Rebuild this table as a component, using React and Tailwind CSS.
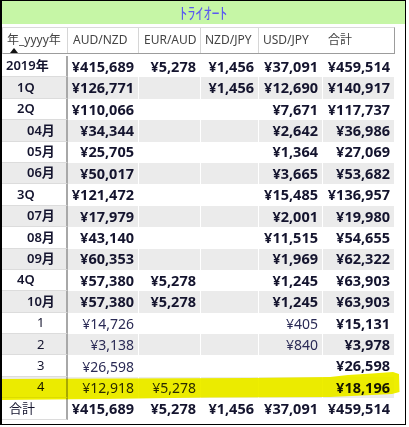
import React from "react";

const COLS = [
  { key: "aud", label: "AUD/NZD", w: "w-[71px]" },
  { key: "eur", label: "EUR/AUD", w: "w-[62px]" },
  { key: "nzd", label: "NZD/JPY", w: "w-[58px]" },
  { key: "usd", label: "USD/JPY", w: "w-[64px]" },
  { key: "sum", label: "合計", w: "w-[71px]" },
];

// level: 0 = 年, 1 = 四半期, 2 = 月, 3 = 日, 9 = 総計
const rows = [
  { label: "2019年", level: 0, v: ["¥415,689", "¥5,278", "¥1,456", "¥37,091", "¥459,514"] },
  { label: "1Q", level: 1, v: ["¥126,771", "", "¥1,456", "¥12,690", "¥140,917"] },
  { label: "2Q", level: 1, v: ["¥110,066", "", "", "¥7,671", "¥117,737"] },
  { label: "04月", level: 2, v: ["¥34,344", "", "", "¥2,642", "¥36,986"] },
  { label: "05月", level: 2, v: ["¥25,705", "", "", "¥1,364", "¥27,069"] },
  { label: "06月", level: 2, v: ["¥50,017", "", "", "¥3,665", "¥53,682"] },
  { label: "3Q", level: 1, v: ["¥121,472", "", "", "¥15,485", "¥136,957"] },
  { label: "07月", level: 2, v: ["¥17,979", "", "", "¥2,001", "¥19,980"] },
  { label: "08月", level: 2, v: ["¥43,140", "", "", "¥11,515", "¥54,655"] },
  { label: "09月", level: 2, v: ["¥60,353", "", "", "¥1,969", "¥62,322"] },
  { label: "4Q", level: 1, v: ["¥57,380", "¥5,278", "", "¥1,245", "¥63,903"] },
  { label: "10月", level: 2, v: ["¥57,380", "¥5,278", "", "¥1,245", "¥63,903"] },
  { label: "1", level: 3, v: ["¥14,726", "", "", "¥405", "¥15,131"] },
  { label: "2", level: 3, v: ["¥3,138", "", "", "¥840", "¥3,978"] },
  { label: "3", level: 3, v: ["¥26,598", "", "", "", "¥26,598"] },
  { label: "4", level: 3, v: ["¥12,918", "¥5,278", "", "", "¥18,196"] },
  { label: "合計", level: 9, v: ["¥415,689", "¥5,278", "¥1,456", "¥37,091", "¥459,514"] },
];

const labelClass = {
  0: "pl-[4px] font-semibold",
  1: "pl-[15px] font-semibold",
  2: "pl-[25px] font-semibold",
  3: "pl-[35px] font-normal",
  9: "pl-[7px] font-normal text-[12px]",
};

export default function App() {
  return (
    <div
      className="relative w-[409px] h-[427px] bg-white text-[#14142e]"
      style={{ fontFamily: '"Noto Sans", "Noto Sans CJK JP", sans-serif' }}
    >
      <div className="w-[406px] h-[425px] border border-l-2 border-black bg-white flex flex-col">
        {/* title */}
        <div className="h-[23px] bg-[#c6f6a6] flex items-center justify-center text-[16px] leading-none text-[#5a5af0]">
          ﾄﾗｲｵｰﾄ
        </div>

        {/* column header */}
        <div className="mt-[3px] w-[393px] h-[27px] flex border-t border-l border-[#dadada] border-b border-r border-b-[#9c9c9c] border-r-[#9c9c9c] text-[12px] leading-[15px] text-[#444]">
          <div className="w-[65px] border-r border-[#d6d6d6] pl-[4px] pt-[4px] flex flex-col">
            <span className="whitespace-nowrap">年_yyyy年</span>
            <svg width="8" height="5" viewBox="0 0 8 5" className="ml-[3px] mt-[1px]">
              <path d="M4 0 L8 5 L0 5 Z" fill="#111" />
            </svg>
          </div>
          {COLS.map((c, i) => (
            <div
              key={c.key}
              className={`${i === 4 ? "flex-1" : c.w} ${i < 3 ? "border-r border-[#d6d6d6]" : ""} ${i === 0 || i === 1 || i === 4 ? "pl-[5px]" : "pl-[4px]"} pt-[4px] whitespace-nowrap`}
            >
              {c.label}
            </div>
          ))}
        </div>

        {/* body */}
        <div className="mt-[2px] flex flex-col">
          {rows.map((r, ri) => {
            const odd = ri % 2 === 1;
            const bg = odd ? "bg-[#ebebeb]" : "bg-white";
            return (
              <div key={ri} className="flex h-[21.4px]">
                <div
                  className={`w-[66px] border-r-2 border-r-[#a8a8a8] border-b border-b-[#dcdcdc] ${bg} flex items-center text-[13px] whitespace-nowrap ${labelClass[r.level]}`}
                >
                  {r.label}
                </div>
                {r.v.map((val, ci) => {
                  const bold = r.level !== 3 || ci === 4;
                  return (
                    <div
                      key={ci}
                      className={`${COLS[ci].w} ${bg} ${ci < 4 ? "border-r border-white" : ""} flex items-center justify-end pr-[4px] whitespace-nowrap ${
                        bold ? "font-bold text-[14.5px]" : "font-normal text-[14px] text-[#2a2a55]"
                      }`}
                    >
                      {val}
                    </div>
                  );
                })}
              </div>
            );
          })}
        </div>
      </div>

      {/* highlighter stroke */}
      <svg
        className="absolute left-0 top-0 pointer-events-none mix-blend-darken"
        width="409"
        height="427"
        viewBox="0 0 409 427"
      >
        <path
          d="M1 379 L120 378.5 L250 378 L330 377 L348 375 L372 373.5 L393 372 L399 374 L399.5 392 L392 394 L362 395.5 L330 397 L210 397.5 L100 399 L1 400 Z"
          fill="#eeee00"
        />
      </svg>
    </div>
  );
}
